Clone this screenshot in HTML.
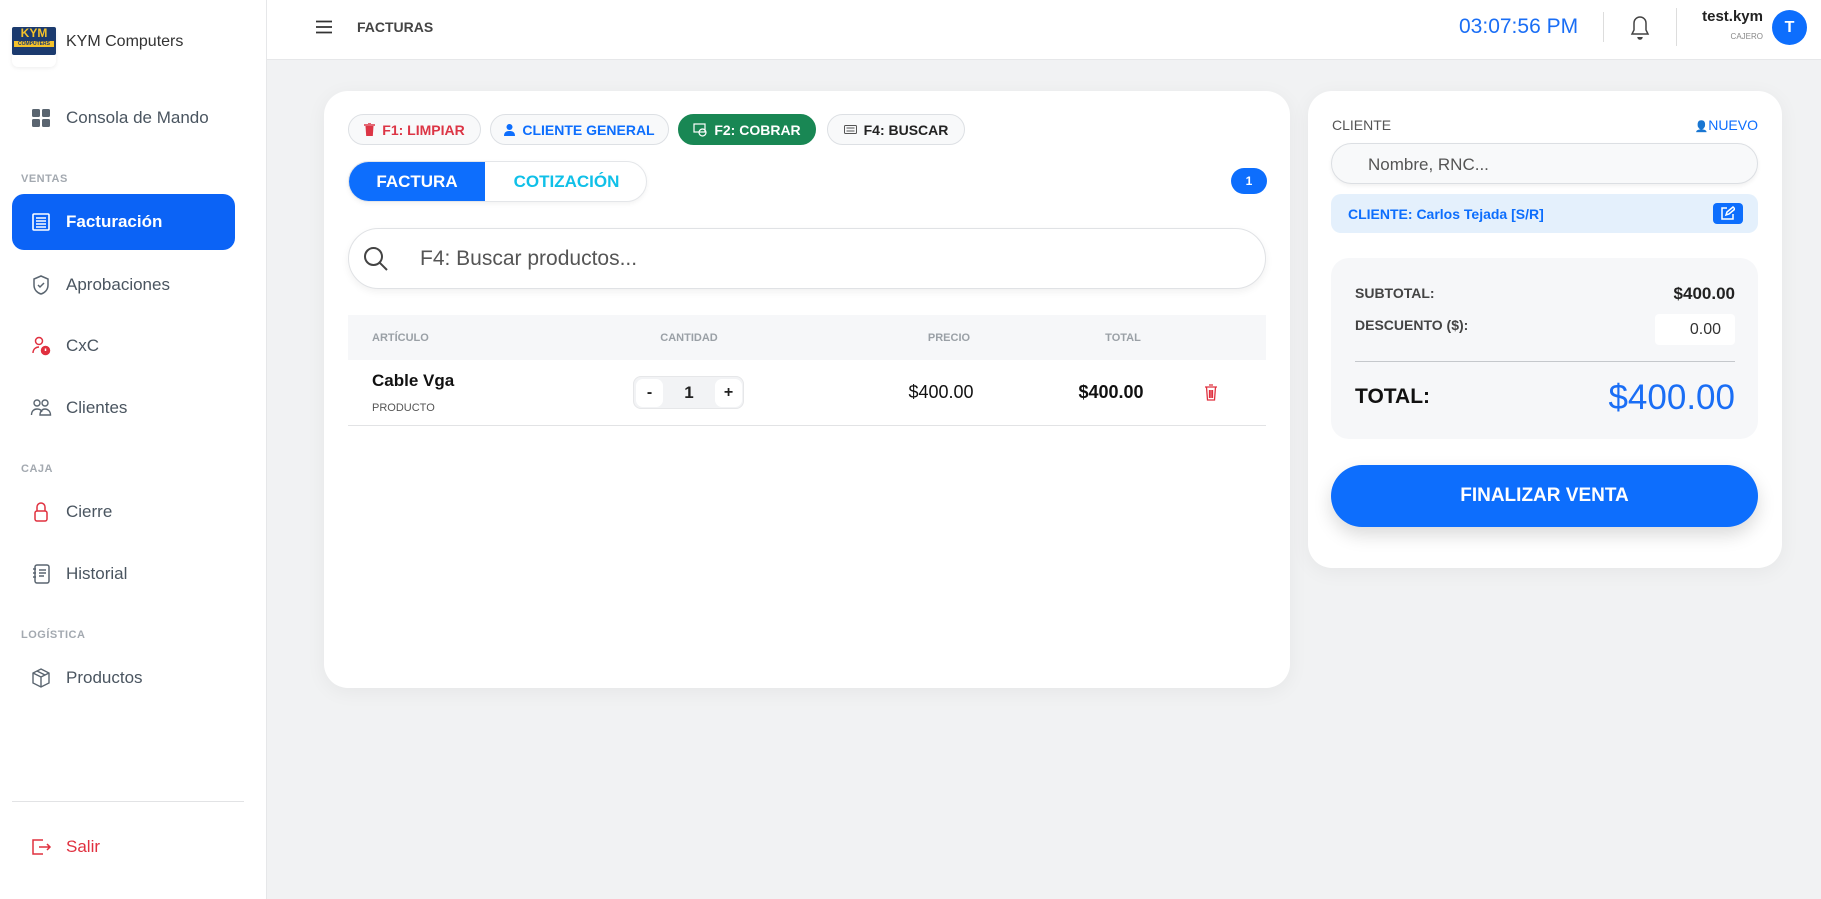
<!DOCTYPE html>
<html><head><meta charset="utf-8"><style>
*{box-sizing:border-box;margin:0;padding:0}
body{width:1821px;height:899px;background:#f1f2f3;font-family:"Liberation Sans",sans-serif;position:relative;overflow:hidden;color:#222}
.a{position:absolute}
.side{left:0;top:0;width:267px;height:899px;background:#fff;border-right:1px solid #e6e7e9}
.nav{position:absolute;left:30px;display:flex;align-items:center;font-size:17px;color:#4a5560;height:24px;transform:translateY(-12px)}
.nav svg{width:22px;height:22px;margin-right:14px}
.sec{position:absolute;left:21px;font-size:11px;font-weight:bold;color:#a3a9b0;letter-spacing:.5px;transform:translateY(-6px)}
.hdr{left:267px;top:0;width:1554px;height:60px;background:#fff;border-bottom:1px solid #e6e7e9}
.card{background:#fff;border-radius:24px;box-shadow:0 4px 20px rgba(0,0,0,.05)}
.pill{position:absolute;top:114px;height:31px;border-radius:16px;border:1px solid #dde0e4;background:#f8f9fa;display:flex;align-items:center;justify-content:center;font-size:14px;font-weight:bold;gap:7px}
.th{position:absolute;top:338px;font-size:11px;color:#9aa0a6;font-weight:bold;transform:translateY(-6px)}
</style></head><body>
<div class="a side">
  <div class="a" style="left:12px;top:26px;width:44px;height:41px;background:#fff;border-radius:6px;box-shadow:0 1px 4px rgba(0,0,0,.08)">
    <div class="a" style="left:0;top:1px;width:44px;height:28px;background:#1b3a6e;border-radius:2px">
      <div style="color:#f4c22b;font-weight:bold;font-size:12px;text-align:center;line-height:13px">KYM</div>
      <div style="margin:1px 2px;background:#f4c22b;color:#1b3a6e;font-size:5px;font-weight:bold;text-align:center;line-height:6px">COMPUTERS</div>
    </div>
  </div>
  <div class="a" style="left:66px;top:33px;font-size:16px;color:#333">KYM Computers</div>
  <div class="nav" style="top:118px"><svg viewBox="0 0 22 22"><rect x="2" y="2" width="8" height="8" rx="1.5" fill="#5a6570"/><rect x="12" y="2" width="8" height="8" rx="1.5" fill="#5a6570"/><rect x="2" y="12" width="8" height="8" rx="1.5" fill="#5a6570"/><rect x="12" y="12" width="8" height="8" rx="1.5" fill="#5a6570"/></svg>Consola de Mando</div>
  <div class="sec" style="top:179px">VENTAS</div>
  <div class="a" style="left:12px;top:194px;width:223px;height:56px;background:#0b63f6;border-radius:12px"></div>
  <div class="nav" style="top:222px;color:#fff;font-weight:bold"><svg viewBox="0 0 22 22" fill="none" stroke="#fff" stroke-width="1.6"><rect x="3" y="3" width="16" height="16" rx="1"/><path d="M6 7h10M6 10h10M6 13h10M6 16h10"/></svg>Facturación</div>
  <div class="nav" style="top:285px"><svg viewBox="0 0 22 22" fill="none" stroke="#5a6570" stroke-width="1.5"><path d="M11 2l7 3v6c0 5-3.5 8-7 9-3.5-1-7-4-7-9V5z"/><path d="M8 11l2 2 4-4"/></svg>Aprobaciones</div>
  <div class="nav" style="top:346px"><svg viewBox="0 0 22 22" fill="none" stroke="#e0303f" stroke-width="1.5"><circle cx="9" cy="6" r="3.5"/><path d="M3 18c0-4 3-6 6-6"/><circle cx="15.5" cy="15.5" r="4" fill="#e0303f"/><path d="M15.5 13.5v2.5" stroke="#fff"/></svg>CxC</div>
  <div class="nav" style="top:408px"><svg viewBox="0 0 22 22" fill="none" stroke="#5a6570" stroke-width="1.4"><circle cx="7" cy="6" r="3"/><circle cx="15" cy="6" r="3"/><path d="M1.5 18c0-4 2.5-6 5.5-6s4 1 5 3M10 18c0-4 2.5-6 5-6s5.5 2 5.5 6z"/></svg>Clientes</div>
  <div class="sec" style="top:469px">CAJA</div>
  <div class="nav" style="top:512px"><svg viewBox="0 0 22 22" fill="none" stroke="#e0303f" stroke-width="1.5"><path d="M7 10V6a4 4 0 018 0v4"/><rect x="5" y="10" width="12" height="10" rx="2"/></svg>Cierre</div>
  <div class="nav" style="top:574px"><svg viewBox="0 0 22 22" fill="none" stroke="#5a6570" stroke-width="1.5"><rect x="5" y="2" width="14" height="18" rx="2"/><path d="M9 7h7M9 10h7M9 13h5M3 6h3M3 10h3M3 14h3"/></svg>Historial</div>
  <div class="sec" style="top:635px">LOGÍSTICA</div>
  <div class="nav" style="top:678px"><svg viewBox="0 0 22 22" fill="none" stroke="#5a6570" stroke-width="1.4"><path d="M11 2l8 4v10l-8 4-8-4V6z"/><path d="M3 6l8 4 8-4M11 10v10M7 4l8 4"/></svg>Productos</div>
  <div class="a" style="left:12px;top:801px;width:232px;height:1px;background:#e2e3e5"></div>
  <div class="nav" style="top:847px;color:#e0303f"><svg viewBox="0 0 22 22" fill="none" stroke="#e0303f" stroke-width="1.5"><path d="M13 4H3v14h10M9 11h11M17 8l3 3-3 3"/></svg>Salir</div>
</div>

<div class="a hdr"></div>
<svg class="a" style="left:316px;top:20px" width="16" height="14" viewBox="0 0 16 14"><path d="M0 1.5h16M0 7h16M0 12.5h16" stroke="#333" stroke-width="1.8"/></svg>
<div class="a" style="left:357px;top:19px;font-size:14px;font-weight:bold;color:#444">FACTURAS</div>
<div class="a" style="left:1459px;top:15px;font-size:21px;color:#1a6ef5">03:07:56 PM</div>
<div class="a" style="left:1603px;top:12px;width:1px;height:30px;background:#ddd"></div>
<svg class="a" style="left:1630px;top:15px" width="20" height="26" viewBox="0 0 20 26" fill="none" stroke="#444" stroke-width="1.5"><path d="M10 2a6 6 0 00-6 6v7l-2 4h16l-2-4V8a6 6 0 00-6-6z"/><path d="M8 22a2 2 0 004 0" fill="#444"/></svg>
<div class="a" style="left:1676px;top:8px;width:1px;height:38px;background:#ddd"></div>
<div class="a" style="left:1680px;top:8px;width:83px;text-align:right;font-size:15px;font-weight:bold;color:#222">test.kym</div>
<div class="a" style="left:1680px;top:32px;width:83px;text-align:right;font-size:8px;color:#888">CAJERO</div>
<div class="a" style="left:1772px;top:10px;width:35px;height:35px;border-radius:50%;background:#0d6efd;color:#fff;font-weight:bold;font-size:16px;text-align:center;line-height:35px">T</div>

<div class="a card" style="left:324px;top:91px;width:966px;height:597px"></div>
<div class="pill" style="left:348px;width:133px;color:#dc3545"><svg width="11" height="13" viewBox="0 0 11 13"><path d="M0 2h11M4 0h3" stroke="#dc3545" stroke-width="1.5"/><path d="M1.5 3h8l-.7 10h-6.6z" fill="#dc3545"/></svg>F1: LIMPIAR</div>
<div class="pill" style="left:490px;width:179px;color:#0d6efd"><svg width="11" height="12" viewBox="0 0 11 12"><circle cx="5.5" cy="3" r="3" fill="#0d6efd"/><path d="M0 12c0-4 2.5-5 5.5-5s5.5 1 5.5 5z" fill="#0d6efd"/></svg>CLIENTE GENERAL</div>
<div class="pill" style="left:678px;width:138px;background:#198754;border-color:#198754;color:#fff"><svg width="14" height="14" viewBox="0 0 14 14" fill="none" stroke="#fff" stroke-width="1.2"><rect x="1" y="1" width="11" height="8"/><circle cx="9.5" cy="9.5" r="3.5"/></svg>F2: COBRAR</div>
<div class="pill" style="left:827px;width:138px;color:#222"><svg width="13" height="9" viewBox="0 0 13 9" fill="none" stroke="#555"><rect x=".5" y=".5" width="12" height="8" rx="1"/><path d="M2.5 3h8M2.5 6h8"/></svg>F4: BUSCAR</div>
<div class="a" style="left:348px;top:161px;width:299px;height:41px;border-radius:21px;border:1px solid #e4e6e9;background:#fff;overflow:hidden;box-shadow:0 2px 5px rgba(0,0,0,.05)">
  <div class="a" style="left:0;top:0;width:136px;height:41px;background:#0d6efd;color:#fff;font-weight:bold;font-size:17px;text-align:center;line-height:40px">FACTURA</div>
  <div class="a" style="left:136px;top:0;width:163px;height:41px;color:#10c0e8;font-weight:bold;font-size:17px;text-align:center;line-height:40px">COTIZACIÓN</div>
</div>
<div class="a" style="left:1231px;top:168px;width:36px;height:26px;border-radius:13px;background:#0d6efd;color:#fff;font-size:12px;font-weight:bold;text-align:center;line-height:26px">1</div>
<div class="a" style="left:348px;top:228px;width:918px;height:61px;border-radius:31px;border:1px solid #e0e2e5;background:#fff;box-shadow:0 3px 8px rgba(0,0,0,.06)"></div>
<svg class="a" style="left:363px;top:246px" width="26" height="26" viewBox="0 0 26 26" fill="none" stroke="#444" stroke-width="2"><circle cx="10.5" cy="10.5" r="8.5"/><path d="M17 17l7 7"/></svg>
<div class="a" style="left:420px;top:247px;font-size:21px;color:#555">F4: Buscar productos...</div>
<div class="a" style="left:348px;top:315px;width:918px;height:45px;background:#f6f7f9"></div>
<div class="th" style="left:372px">ARTÍCULO</div>
<div class="th" style="left:639px;width:100px;text-align:center">CANTIDAD</div>
<div class="th" style="left:899px;width:100px;text-align:center">PRECIO</div>
<div class="th" style="left:1073px;width:100px;text-align:center">TOTAL</div>
<div class="a" style="left:372px;top:371px;font-size:17px;font-weight:bold;color:#111">Cable Vga</div>
<div class="a" style="left:372px;top:402px;font-size:11px;color:#555">PRODUCTO</div>
<div class="a" style="left:633px;top:376px;width:111px;height:33px;border-radius:8px;border:1px solid #e6e7e9;background:#f2f3f5">
  <div class="a" style="left:2px;top:2px;width:27px;height:28px;background:#fff;border-radius:7px;text-align:center;font-weight:bold;font-size:16px;line-height:28px">-</div>
  <div class="a" style="left:29px;top:0;width:52px;text-align:center;font-weight:bold;font-size:17px;line-height:31px">1</div>
  <div class="a" style="left:81px;top:2px;width:27px;height:28px;background:#fff;border-radius:7px;text-align:center;font-weight:bold;font-size:16px;line-height:28px">+</div>
</div>
<div class="a" style="left:871px;top:382px;width:140px;text-align:center;font-size:18px;color:#111">$400.00</div>
<div class="a" style="left:1041px;top:382px;width:140px;text-align:center;font-size:18px;font-weight:bold;color:#111">$400.00</div>
<svg class="a" style="left:1204px;top:384px" width="14" height="17" viewBox="0 0 14 17" fill="none" stroke="#e0303f" stroke-width="1.3"><path d="M1 3h12M5 1h4M2.5 3l1 13h7l1-13M5.5 6v8M7 6v8M8.5 6v8"/></svg>
<div class="a" style="left:348px;top:425px;width:918px;height:1px;background:#e2e3e5"></div>

<div class="a card" style="left:1308px;top:91px;width:474px;height:477px"></div>
<div class="a" style="left:1332px;top:117px;font-size:14px;color:#555">CLIENTE</div>
<div class="a" style="left:1680px;top:117px;width:78px;text-align:right;font-size:14px;color:#0d6efd"><span style="font-size:11px">👤</span>NUEVO</div>
<div class="a" style="left:1331px;top:143px;width:427px;height:41px;border-radius:21px;border:1px solid #dcdfe3;background:#f8f9fa;box-shadow:0 2px 4px rgba(0,0,0,.06)"></div>
<div class="a" style="left:1368px;top:155px;font-size:17px;color:#555">Nombre, RNC...</div>
<div class="a" style="left:1331px;top:194px;width:427px;height:39px;border-radius:10px;background:#e4f0fc"></div>
<div class="a" style="left:1348px;top:206px;font-size:14px;font-weight:bold;color:#0d6efd">CLIENTE: Carlos Tejada [S/R]</div>
<div class="a" style="left:1713px;top:203px;width:30px;height:21px;border-radius:4px;background:#0d6efd"></div>
<svg class="a" style="left:1720px;top:206px" width="15" height="15" viewBox="0 0 15 15" fill="none" stroke="#fff" stroke-width="1.5"><path d="M7 2H2v11h11V8"/><path d="M6 9l1-3 6-5 2 2-6 5z"/></svg>
<div class="a" style="left:1331px;top:258px;width:427px;height:181px;border-radius:18px;background:#f6f7f9"></div>
<div class="a" style="left:1355px;top:285px;font-size:14px;font-weight:bold;color:#444">SUBTOTAL:</div>
<div class="a" style="left:1600px;top:284px;width:135px;text-align:right;font-size:17px;font-weight:bold;color:#222">$400.00</div>
<div class="a" style="left:1355px;top:317px;font-size:14px;font-weight:bold;color:#444">DESCUENTO ($):</div>
<div class="a" style="left:1655px;top:314px;width:80px;height:31px;background:#fff;border-radius:4px;text-align:right;padding-right:14px;font-size:16px;line-height:31px;color:#333">0.00</div>
<div class="a" style="left:1355px;top:361px;width:380px;height:1px;background:#c5c8cc"></div>
<div class="a" style="left:1355px;top:385px;font-size:21px;font-weight:bold;color:#111">TOTAL:</div>
<div class="a" style="left:1535px;top:378px;width:200px;text-align:right;font-size:35px;color:#1a6ef5">$400.00</div>
<div class="a" style="left:1331px;top:465px;width:427px;height:62px;border-radius:31px;background:#0d6efd;color:#fff;font-weight:bold;font-size:19px;text-align:center;line-height:62px;box-shadow:0 8px 18px rgba(0,0,0,.15)">FINALIZAR VENTA</div>
</body></html>
